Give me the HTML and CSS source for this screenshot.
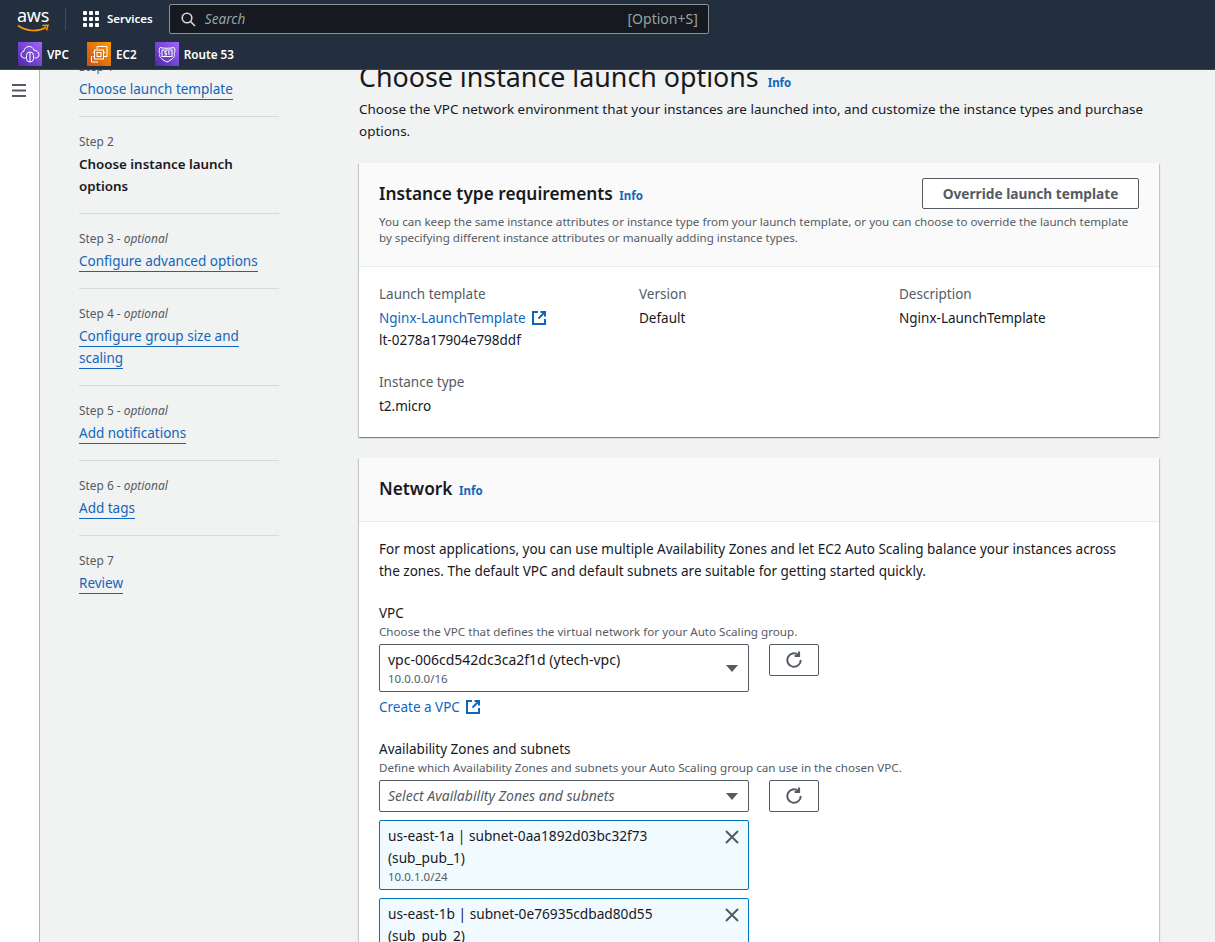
FILE: index.html
```html
<!DOCTYPE html>
<html lang="en">
<head>
  <meta charset="UTF-8">
  <meta name="viewport" content="width=device-width, initial-scale=1.0">
  <title>Choose instance launch options</title>
  <link rel="stylesheet" href="styles.css">
</head>
<body>
  <header class="topbar">
    <div class="nav-row">
      <a class="logo">
        <span class="logo-text">aws</span>
        <svg class="logo-smile" width="32" height="9" viewBox="0 0 32 9"><path d="M1 1.5C9 7.5 21 8 29 3.5" fill="none" stroke="#f90" stroke-width="1.6"/><path d="M25.5 1.5L31 1.2L29.5 6.5" fill="none" stroke="#f90" stroke-width="1.4"/></svg>
      </a>
      <span class="nav-sep"></span>
      <a class="services">
        <svg width="16" height="16" viewBox="0 0 16 16" fill="#fff"><rect x="0" y="0" width="4" height="4" rx="1"/><rect x="6" y="0" width="4" height="4" rx="1"/><rect x="12" y="0" width="4" height="4" rx="1"/><rect x="0" y="6" width="4" height="4" rx="1"/><rect x="6" y="6" width="4" height="4" rx="1"/><rect x="12" y="6" width="4" height="4" rx="1"/><rect x="0" y="12" width="4" height="4" rx="1"/><rect x="6" y="12" width="4" height="4" rx="1"/><rect x="12" y="12" width="4" height="4" rx="1"/></svg>
        <span>Services</span>
      </a>
      <div class="search">
        <svg width="15" height="15" viewBox="0 0 15 15" fill="none" stroke="#d5dbdb" stroke-width="1.6"><circle cx="6" cy="6" r="4.8"/><path d="M9.5 9.5L14 14"/></svg>
        <span class="search-text">Search</span>
        <span class="search-key">[Option+S]</span>
      </div>
    </div>
    <div class="fav-row">
      <a class="fav">
        <span class="tile tile-purple">
          <svg width="20" height="20" viewBox="0 0 20 20" fill="none" stroke="#fff" stroke-width="1"><path d="M6 14H4.5C2.5 14 1 12.5 1 10.6C1 8.9 2.2 7.6 3.8 7.4C4 4.7 6.2 2.5 9 2.5C11.4 2.5 13.400 4 14.100 6.200C16.700 6.300 19 8.200 19 10.600C19 12.500 17.500 14 15.500 14H14.500"/><rect x="6.500" y="8" width="7" height="10" rx="3.500"/><path d="M10 8V18"/></svg>
        </span>
        <span>VPC</span>
      </a>
      <a class="fav">
        <span class="tile tile-orange">
          <svg width="20" height="20" viewBox="0 0 20 20" fill="none" stroke="#fff" stroke-width="1"><path d="M8 5V2.500H18V12.500H15"/><rect x="5.500" y="6" width="9" height="9"/><rect x="8" y="8.500" width="4" height="4"/><path d="M2.500 12V18H9M5.500 8.500H4M5.500 12.500H4M16 8.500H14.500"/></svg>
        </span>
        <span>EC2</span>
      </a>
      <a class="fav">
        <span class="tile tile-purple">
          <svg width="20" height="20" viewBox="0 0 20 20" fill="none" stroke="#fff" stroke-width="1"><path d="M3 3.500C6 4.500 14 4.500 17 3.500C18.500 6 18 8 17 9.500C18.500 12 16.500 15 10 18C3.500 15 1.500 12 3 9.500C2 8 1.500 6 3 3.500Z"/><rect x="5" y="6" width="10" height="6.500"/><path d="M7.500 11H9.500V9.200H7.800V7.500H9.500M11 8L12 7.500V11"/></svg>
        </span>
        <span>Route 53</span>
      </a>
    </div>
  </header>

  <div class="layout">
    <div class="rail">
      <svg width="14" height="13" viewBox="0 0 14 13" fill="#545b64"><rect y="0" width="14" height="2"/><rect y="5.500" width="14" height="2"/><rect y="11" width="14" height="2"/></svg>
    </div>

    <nav class="steps">
      <div class="step">
        <div class="step-label">Step 1</div>
        <a class="step-link">Choose launch template</a>
      </div>
      <div class="step">
        <div class="step-label">Step 2</div>
        <div class="step-current">Choose instance launch options</div>
      </div>
      <div class="step">
        <div class="step-label">Step 3 - <em>optional</em></div>
        <a class="step-link">Configure advanced options</a>
      </div>
      <div class="step">
        <div class="step-label">Step 4 - <em>optional</em></div>
        <a class="step-link">Configure group size and scaling</a>
      </div>
      <div class="step">
        <div class="step-label">Step 5 - <em>optional</em></div>
        <a class="step-link">Add notifications</a>
      </div>
      <div class="step">
        <div class="step-label">Step 6 - <em>optional</em></div>
        <a class="step-link">Add tags</a>
      </div>
      <div class="step">
        <div class="step-label">Step 7</div>
        <a class="step-link">Review</a>
      </div>
    </nav>

    <main class="main">
      <h1 class="page-title">Choose instance launch options <a class="info">Info</a></h1>
      <p class="page-desc">Choose the VPC network environment that your instances are launched into, and customize the instance types and purchase options.</p>

      <section class="card">
        <div class="card-head">
          <div class="card-title-row">
            <h2 class="card-title">Instance type requirements <a class="info">Info</a></h2>
            <button class="btn" type="button">Override launch template</button>
          </div>
          <p class="card-desc">You can keep the same instance attributes or instance type from your launch template, or you can choose to override the launch template by specifying different instance attributes or manually adding instance types.</p>
        </div>
        <div class="card-body details">
          <div class="detail">
            <div class="detail-label">Launch template</div>
            <a class="link">Nginx-LaunchTemplate
              <svg class="ext" width="16" height="16" viewBox="0 0 16 16" fill="none" stroke="#1166bb" stroke-width="2"><path d="M7 2H2V14H14V9"/><path d="M9.500 2H14V6.500"/><path d="M14 2L7.500 8.500"/></svg>
            </a>
            <div>lt-0278a17904e798ddf</div>
          </div>
          <div class="detail">
            <div class="detail-label">Version</div>
            <div>Default</div>
          </div>
          <div class="detail">
            <div class="detail-label">Description</div>
            <div>Nginx-LaunchTemplate</div>
          </div>
          <div class="detail">
            <div class="detail-label">Instance type</div>
            <div>t2.micro</div>
          </div>
        </div>
      </section>

      <section class="card">
        <div class="card-head network-head">
          <h2 class="card-title">Network <a class="info">Info</a></h2>
        </div>
        <div class="card-body">
          <p class="network-intro">For most applications, you can use multiple Availability Zones and let EC2 Auto Scaling balance your instances across the zones. The default VPC and default subnets are suitable for getting started quickly.</p>

          <div class="field">
            <div class="field-label">VPC</div>
            <div class="field-hint">Choose the VPC that defines the virtual network for your Auto Scaling group.</div>
            <div class="control-row">
              <div class="select select-tall">
                <div>
                  <div>vpc-006cd542dc3ca2f1d (ytech-vpc)</div>
                  <div class="sub">10.0.0.0/16</div>
                </div>
                <span class="caret"></span>
              </div>
              <button class="refresh" type="button">
                <svg width="18" height="18" viewBox="0 0 16 16" fill="none" stroke="#545b64" stroke-width="1.800"><path d="M14 8A6 6 0 1 1 11.800 3.400"/><path d="M12.500 0.500V4.500H8.500"/></svg>
              </button>
            </div>
            <a class="link create-link">Create a VPC
              <svg class="ext" width="16" height="16" viewBox="0 0 16 16" fill="none" stroke="#1166bb" stroke-width="2"><path d="M7 2H2V14H14V9"/><path d="M9.500 2H14V6.500"/><path d="M14 2L7.500 8.500"/></svg>
            </a>
          </div>

          <div class="field field-az">
            <div class="field-label">Availability Zones and subnets</div>
            <div class="field-hint">Define which Availability Zones and subnets your Auto Scaling group can use in the chosen VPC.</div>
            <div class="control-row">
              <div class="select">
                <em class="placeholder">Select Availability Zones and subnets</em>
                <span class="caret"></span>
              </div>
              <button class="refresh" type="button">
                <svg width="18" height="18" viewBox="0 0 16 16" fill="none" stroke="#545b64" stroke-width="1.800"><path d="M14 8A6 6 0 1 1 11.800 3.400"/><path d="M12.500 0.500V4.500H8.500"/></svg>
              </button>
            </div>
            <div class="token">
              <div>
                <div>us-east-1a | subnet-0aa1892d03bc32f73 (sub_pub_1)</div>
                <div class="sub">10.0.1.0/24</div>
              </div>
              <svg class="token-x" width="14" height="14" viewBox="0 0 14 14" stroke="#545b64" stroke-width="2"><path d="M1 1L13 13M13 1L1 13"/></svg>
            </div>
            <div class="token">
              <div>
                <div>us-east-1b | subnet-0e76935cdbad80d55 (sub_pub_2)</div>
                <div class="sub">10.0.2.0/24</div>
              </div>
              <svg class="token-x" width="14" height="14" viewBox="0 0 14 14" stroke="#545b64" stroke-width="2"><path d="M1 1L13 13M13 1L1 13"/></svg>
            </div>
          </div>
        </div>
      </section>
    </main>
  </div>
</body>
</html>
```

FILE: styles.css
```css
* { box-sizing: border-box; }
html, body { height: 942px; overflow: hidden; }
body { margin: 0; background: #f1f2f2; color: #16191f; font-family: "Noto Sans", "Open Sans", sans-serif; font-size: 13.500px; line-height: 22px; }
p, h1, h2 { margin: 0; }
a { color: #1166bb; }

.topbar { position: relative; z-index: 2; height: 70px; background: #232f3e; border-bottom: 1px solid #3b4654; color: #fff; }
.nav-row { display: flex; align-items: center; height: 38px; padding: 0 0 0 17px; }
.logo { position: relative; display: block; width: 32px; height: 28px; }
.logo-text { display: block; font-size: 18px; line-height: 20px; letter-spacing: -0.3px; color: #fff; }
.logo-smile { position: absolute; left: 0; top: 19px; }
.nav-sep { width: 1px; height: 22px; margin: 0 17px 0 16px; background: #414d5c; }
.services { display: flex; align-items: center; gap: 8px; font-size: 11.500px; font-weight: 600; color: #fff; }
.search { display: flex; align-items: center; width: 540px; height: 30px; margin-left: 16px; padding: 0 10px 0 11px; background: #16191f; border: 1px solid #879596; border-radius: 2px; color: #95a5a6; }
.search-text { margin-left: 9px; font-size: 13.600px; font-style: italic; flex: 1; }
.search-key { font-size: 14px; }
.fav-row { display: flex; align-items: center; height: 31px; padding: 1px 0 0 18px; gap: 18px; }
.fav { display: flex; align-items: center; gap: 5px; font-size: 11.700px; font-weight: 600; color: #fff; }
.tile { display: flex; align-items: center; justify-content: center; width: 24px; height: 24px; }
.tile-purple { background: linear-gradient(45deg, #4d27a8, #a166ff); }
.tile-orange { background: linear-gradient(45deg, #c8511b, #ff9900); }

.layout { display: flex; height: 872px; overflow: hidden; }
.rail { flex: none; width: 40px; padding: 14px 0 0 12px; background: #fff; border-right: 1px solid #aab7b8; line-height: 0; }

.steps { flex: none; width: 200px; margin: -28px 0 0 39px; }
.step { padding: 16px 0; border-bottom: 1px solid #d5dbdb; }
.step:last-child { border-bottom: none; }
.step-label { margin-bottom: 4px; font-size: 11.900px; line-height: 16px; color: #545b64; }
.step-link { color: #1166bb; border-bottom: 1px solid #1166bb; padding-bottom: 1px; }
.step-current { font-size: 13.350px; font-weight: 600; }

.main { flex: none; width: 800px; margin: -11px 0 0 80px; }
.page-title { font-size: 26.800px; line-height: 36px; font-weight: 400; }
.info { font-size: 11.500px; font-weight: 700; color: #1166bb; margin-left: 2px; }
.page-desc { margin-top: -3px; font-size: 13.450px; }

.card { margin-top: 21px; background: #fff; box-shadow: 0 1px 1px 0 rgba(0, 28, 36, 0.3), 1px 1px 1px 0 rgba(0, 28, 36, 0.15), -1px 1px 1px 0 rgba(0, 28, 36, 0.15); }
.card-head { padding: 15px 20px 20px; background: #fafafa; border-bottom: 1px solid #eaeded; }
.network-head { padding: 16px 20px 17px; }
.card-title-row { display: flex; justify-content: space-between; align-items: center; }
.card-title { padding-top: 2px; font-size: 17.300px; line-height: 26px; font-weight: 600; }
.card-desc { margin-top: 5px; font-size: 11.600px; line-height: 16px; color: #545b64; }
.btn { height: 31px; width: 217px; padding: 0; background: #fff; border: 1px solid #545b64; border-radius: 2px; font: 700 13.700px/20px "Noto Sans", sans-serif; color: #545b64; }
.card-body { padding: 16px 20px 20px; }

.details { display: grid; grid-template-columns: repeat(3, 260px); row-gap: 20px; }
.detail-label { color: #545b64; margin-bottom: 2px; }
.link { display: inline-flex; align-items: center; gap: 5px; }
.ext { flex: none; }

.field { margin-top: 20px; }
.field-label { line-height: 22px; }
.field-hint { font-size: 11.650px; line-height: 16px; color: #545b64; }
.control-row { display: flex; align-items: flex-start; gap: 20px; margin-top: 4px; }
.select { display: flex; align-items: center; justify-content: space-between; width: 370px; height: 32px; padding: 0 10px 0 8px; background: #fff; border: 1px solid #545b64; border-radius: 2px; font-size: 14px; }
.select-tall { height: 48px; }
.sub { font-size: 11.500px; line-height: 16px; color: #545b64; }
.caret { width: 0; height: 0; border-left: 6px solid transparent; border-right: 6px solid transparent; border-top: 7px solid #545b64; }
.placeholder { color: #545b64; }
.refresh { display: flex; align-items: center; justify-content: center; width: 50px; height: 32px; padding: 0; background: #fff; border: 1px solid #545b64; border-radius: 2px; }
.create-link { margin-top: 4px; }
.token { display: flex; align-items: flex-start; justify-content: space-between; gap: 28px; width: 370px; margin-top: 8px; padding: 4px 9px 4px 8px; background: #f1faff; border: 1px solid #0073bb; border-radius: 2px; font-size: 13.700px; }
.token-x { flex: none; margin-top: 5px; }
```
